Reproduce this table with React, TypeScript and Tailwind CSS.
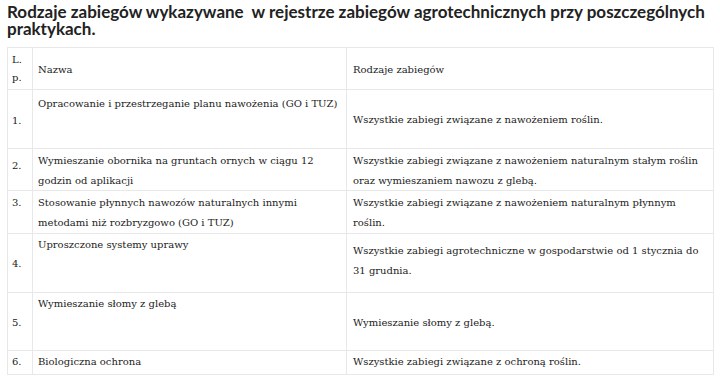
const rows = [
  {
    lp: "1.",
    name: ["Opracowanie i przestrzeganie planu nawożenia (GO i TUZ)"],
    kind: ["Wszystkie zabiegi związane z nawożeniem roślin."],
    h: "h-[59px]",
    lpPad: "pt-[21px]",
    namePad: "pt-[4px]",
    kindPad: "pt-[20px]",
  },
  {
    lp: "2.",
    name: ["Wymieszanie obornika na gruntach ornych w ciągu 12", "godzin od aplikacji"],
    kind: ["Wszystkie zabiegi związane z nawożeniem naturalnym stałym roślin", "oraz wymieszaniem nawozu z glebą."],
    h: "h-[42px]",
    lpPad: "pt-[7px]",
    namePad: "pt-[2px]",
    kindPad: "pt-[2px]",
  },
  {
    lp: "3.",
    name: ["Stosowanie płynnych nawozów naturalnych innymi", "metodami niż rozbryzgowo (GO i TUZ)"],
    kind: ["Wszystkie zabiegi związane z nawożeniem naturalnym płynnym", "roślin."],
    h: "h-[43px]",
    lpPad: "pt-[2px]",
    namePad: "pt-[2px]",
    kindPad: "pt-[2px]",
  },
  {
    lp: "4.",
    name: ["Uproszczone systemy uprawy"],
    kind: ["Wszystkie zabiegi agrotechniczne w gospodarstwie od 1 stycznia do", "31 grudnia."],
    h: "h-[59px]",
    lpPad: "pt-[20px]",
    namePad: "pt-[1px]",
    kindPad: "pt-[7px]",
  },
  {
    lp: "5.",
    name: ["Wymieszanie słomy z glebą"],
    kind: ["Wymieszanie słomy z glebą."],
    h: "h-[58px]",
    lpPad: "pt-[20px]",
    namePad: "pt-[1px]",
    kindPad: "pt-[20px]",
  },
  {
    lp: "6.",
    name: ["Biologiczna ochrona"],
    kind: ["Wszystkie zabiegi związane z ochroną roślin."],
    h: "h-[23px]",
    lpPad: "pt-[1px]",
    namePad: "pt-[1px]",
    kindPad: "pt-[1px]",
  },
];

const Lines = ({ lines }: { lines: string[] }) => (
  <>
    {lines.map((l, i) => (
      <div key={i} className="whitespace-nowrap">
        {l}
      </div>
    ))}
  </>
);

const App = () => {
  return (
    <div className="w-[720px] h-[389px] bg-white overflow-hidden px-[7px]">
      <h2 className="font-['Lato',sans-serif] font-bold text-[17px] leading-[17px] text-[#222] pt-[3px]">
        Rodzaje zabiegów wykazywane&nbsp; w rejestrze zabiegów agrotechnicznych przy poszczególnych praktykach.
      </h2>
      <div className="mt-[10px] w-[707px] border border-[#e8e8e8] font-['DejaVu_Serif',serif] text-[10px] leading-[20px] text-[#222]">
        <div className="flex h-[42px] border-b border-[#e8e8e8]">
          <div className="w-[25px] shrink-0 border-r border-[#e8e8e8] pl-[4px] pt-[3px] leading-[18px]">
            <div>L.</div>
            <div>p.</div>
          </div>
          <div className="w-[314px] shrink-0 border-r border-[#e8e8e8] pl-[5px] pt-[12px]">Nazwa</div>
          <div className="flex-1 pl-[6px] pt-[12px]">Rodzaje zabiegów</div>
        </div>
        {rows.map((r, i) => (
          <div
            key={i}
            className={`flex ${r.h} ${i < rows.length - 1 ? "border-b border-[#e8e8e8]" : ""}`}
          >
            <div className={`w-[25px] shrink-0 border-r border-[#e8e8e8] pl-[4px] ${r.lpPad}`}>{r.lp}</div>
            <div className={`w-[314px] shrink-0 border-r border-[#e8e8e8] pl-[5px] ${r.namePad}`}>
              <Lines lines={r.name} />
            </div>
            <div className={`flex-1 pl-[6px] ${r.kindPad}`}>
              <Lines lines={r.kind} />
            </div>
          </div>
        ))}
      </div>
    </div>
  );
};

export default App;
